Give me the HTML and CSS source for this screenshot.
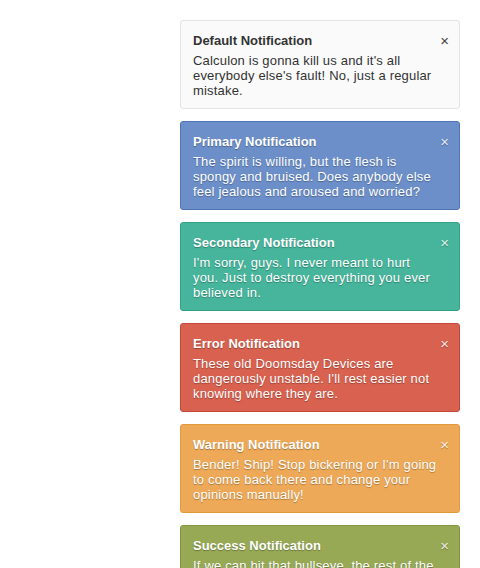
FILE: index.html
```html
<!DOCTYPE html>
<html lang="en">
<head>
    <meta charset="UTF-8">
    <meta name="viewport" content="width=device-width, initial-scale=1.0">
    <title>Notifications</title>
    <link rel="stylesheet" href="styles.css">
</head>
<body>
    <div class="stack">
        <!-- Default -->
        <div class="note note-default">
            <span class="close">&times;</span>
            <h3>Default Notification</h3>
            <p>Calculon is gonna kill us and it's all everybody else's fault! No, just a regular mistake.</p>
        </div>

        <!-- Primary -->
        <div class="note note-primary">
            <span class="close">&times;</span>
            <h3>Primary Notification</h3>
            <p>The spirit is willing, but the flesh is spongy and bruised. Does anybody else feel jealous and aroused and worried?</p>
        </div>

        <!-- Secondary -->
        <div class="note note-secondary">
            <span class="close">&times;</span>
            <h3>Secondary Notification</h3>
            <p>I'm sorry, guys. I never meant to hurt you. Just to destroy everything you ever believed in.</p>
        </div>

        <!-- Error -->
        <div class="note note-error">
            <span class="close">&times;</span>
            <h3>Error Notification</h3>
            <p>These old Doomsday Devices are dangerously unstable. I'll rest easier not knowing where they are.</p>
        </div>

        <!-- Warning -->
        <div class="note note-warning">
            <span class="close">&times;</span>
            <h3>Warning Notification</h3>
            <p>Bender! Ship! Stop bickering or I'm going to come back there and change your opinions manually!</p>
        </div>

        <!-- Success -->
        <div class="note note-success">
            <span class="close">&times;</span>
            <h3>Success Notification</h3>
            <p>If we can hit that bullseye, the rest of the dominoes will fall like a house of cards. Checkmate.</p>
        </div>
    </div>
</body>
</html>
```

FILE: styles.css
```css
/* page */
body {
    margin: 0;
    padding: 0;
    background-color: #fff;
    font-family: "Liberation Sans", Arial, sans-serif;
    font-size: 13px;
}

.stack {
    display: flex;
    flex-direction: column;
    align-items: flex-end;
    gap: 12px;
    padding: 20px 20px;
}

/* notification boxes */
.note {
    position: relative;
    width: 280px;
    box-sizing: border-box;
    padding: 12px 22px 10px 12px;
    border: 1px solid #e4e4e4;
    border-radius: 3px;
    background-color: #fafafa;
    color: #333;
}

.note h3 {
    margin: 0 0 4px 0;
    font-size: 13px;
    line-height: 16px;
    font-weight: bold;
}

.note p {
    margin: 0;
    line-height: 15px;
    letter-spacing: 0.18px;
}

.close {
    position: absolute;
    top: 12px;
    right: 10px;
    font-size: 15px;
    line-height: 16px;
    color: #444;
    cursor: pointer;
}

/* coloured variants */
.note-primary,
.note-secondary,
.note-error,
.note-warning,
.note-success {
    color: #fff;
    text-shadow: 0 1px 1px rgba(0, 0, 0, 0.3);
}

.note-primary .close,
.note-secondary .close,
.note-error .close,
.note-warning .close,
.note-success .close {
    color: rgba(255, 255, 255, 0.85);
}

.note-primary {
    background-color: #6c8fca;
    border-color: #4f74b6;
}

.note-secondary {
    background-color: #46b59c;
    border-color: #32a186;
}

.note-error {
    background-color: #d9614f;
    border-color: #c6473a;
}

.note-warning {
    background-color: #eea958;
    border-color: #e39a3d;
}

.note-success {
    background-color: #97a955;
    border-color: #83963f;
}
```
